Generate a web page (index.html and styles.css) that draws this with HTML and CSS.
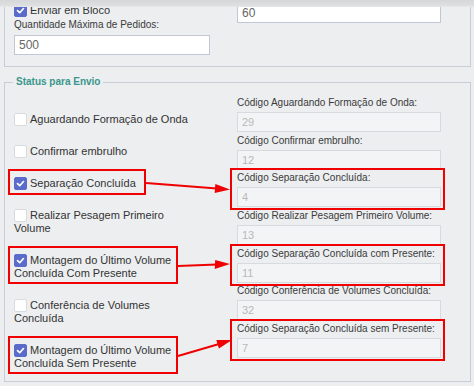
FILE: index.html
```html
<!DOCTYPE html>
<html lang="pt-BR">
<head>
<meta charset="UTF-8" />
<meta name="viewport" content="width=device-width, initial-scale=1" />
<title>Status para Envio</title>
<link rel="stylesheet" href="styles.css">
</head>
<body>

  <div class="topbar"></div>

  <main class="page">

    <div class="panel panel-top">
      <div class="col">
        <label class="check"><span class="box on"><svg viewBox="0 0 13 13"><polyline points="3,6.6 5.6,9.1 10,4.2" /></svg></span>Enviar em Bloco</label>
        <label class="field-label">Quantidade Máxima de Pedidos:</label>
        <input class="text text-short" type="text" value="500" />
      </div>
      <div class="col">
        <input class="text text-cut" type="text" value="60" />
      </div>
    </div>

    <fieldset class="panel status">
      <legend>Status para Envio</legend>

      <div class="checks">
        <label class="check"><span class="box"></span>Aguardando Formação de Onda</label>
        <label class="check"><span class="box"></span>Confirmar embrulho</label>
        <label class="check mark"><span class="box on"><svg viewBox="0 0 13 13"><polyline points="3,6.6 5.6,9.1 10,4.2" /></svg></span>Separação Concluída</label>
        <label class="check"><span class="box"></span>Realizar Pesagem Primeiro Volume</label>
        <label class="check mark wrap"><span class="box on"><svg viewBox="0 0 13 13"><polyline points="3,6.6 5.6,9.1 10,4.2" /></svg></span>Montagem do Último Volume Concluída Com Presente</label>
        <label class="check"><span class="box"></span>Conferência de Volumes Concluída</label>
        <label class="check mark wrap"><span class="box on"><svg viewBox="0 0 13 13"><polyline points="3,6.6 5.6,9.1 10,4.2" /></svg></span>Montagem do Último Volume Concluída Sem Presente</label>
      </div>

      <div class="fields">
        <div class="field">
          <label class="field-label">Código Aguardando Formação de Onda:</label>
          <input class="text" type="text" value="29" disabled />
        </div>
        <div class="field">
          <label class="field-label">Código Confirmar embrulho:</label>
          <input class="text" type="text" value="12" disabled />
        </div>
        <div class="field mark">
          <label class="field-label">Código Separação Concluída:</label>
          <input class="text" type="text" value="4" disabled />
        </div>
        <div class="field">
          <label class="field-label">Código Realizar Pesagem Primeiro Volume:</label>
          <input class="text" type="text" value="13" disabled />
        </div>
        <div class="field mark">
          <label class="field-label">Código Separação Concluída com Presente:</label>
          <input class="text" type="text" value="11" disabled />
        </div>
        <div class="field">
          <label class="field-label">Código Conferência de Volumes Concluída:</label>
          <input class="text" type="text" value="32" disabled />
        </div>
        <div class="field mark">
          <label class="field-label">Código Separação Concluída sem Presente:</label>
          <input class="text" type="text" value="7" disabled />
        </div>
      </div>
    </fieldset>

  </main>

  <!-- setas de anotação por cima do formulário -->
  <svg class="arrows" viewBox="0 0 474 386">
    <line x1="146" y1="183" x2="217" y2="188.4" />
    <polygon points="230,189.5 215.3,183.9 214.7,192.9" />
    <line x1="178" y1="266" x2="217" y2="264.5" />
    <polygon points="230,264 215.2,260.1 214.8,269.1" />
    <line x1="178" y1="356" x2="219" y2="344" />
    <polygon points="232,340 218.9,348.6 216.3,340" />
  </svg>

</body>
</html>
```

FILE: styles.css
```css
body {
  font-family: 'Liberation Sans', Arial, sans-serif;
  margin: 0;
  background: #eceef0;
  color: #333;
  position: relative;
  overflow: hidden;
}

/* sombra do cabeçalho fixo */
.topbar {
  position: fixed;
  top: 0;
  left: 0;
  right: 0;
  height: 6px;
  background: linear-gradient(#d6d7d9, #dfe0e2);
  border-bottom: 1px solid #e4e5e7;
  z-index: 5;
}

.page {
  padding: 0 3px 0 4px;
}

.panel {
  border: 1px solid #c8ccd6;
  margin: 0;
  min-width: 0;
  display: grid;
  grid-template-columns: 223px 204px;
}

.panel-top {
  border-top: 0;
  padding: 4px 0 11px 9px;
}

.panel-top .col {
  display: flex;
  flex-direction: column;
  align-items: flex-start;
}

.status {
  margin-top: 9px;
  padding: 0 0 11px 9px;
}

.status legend {
  font-size: 10px;
  line-height: 12px;
  font-weight: bold;
  color: #3a978b;
  padding: 0 3px;
  margin-left: -1px;
}

/* checkboxes */
.check {
  display: block;
  font-size: 11px;
  line-height: 13px;
  color: #333;
  max-width: 182px;
  position: relative;
}

.box {
  display: inline-block;
  vertical-align: top;
  width: 13px;
  height: 13px;
  margin-right: 3px;
  box-sizing: border-box;
  background: #fff;
  border: 1px solid #d9dadc;
  border-radius: 2px;
}

.box.on {
  background: #5b6bc9;
  border-color: #5b6bc9;
}

.box svg {
  display: block;
  width: 11px;
  height: 11px;
  margin: 0;
}

.box polyline {
  fill: none;
  stroke: #fff;
  stroke-width: 2;
  stroke-linecap: round;
  stroke-linejoin: round;
}

.checks {
  display: flex;
  flex-direction: column;
  align-items: flex-start;
  gap: 19px;
  padding-top: 25px;
}

/* campos */
.field-label {
  display: block;
  font-size: 10px;
  line-height: 13px;
  color: #3b3b3b;
}

.panel-top .field-label {
  margin-top: 1px;
}

.text {
  display: block;
  width: 204px;
  height: 20px;
  box-sizing: border-box;
  margin: 3px 0 0;
  padding: 0 4px;
  border: 1px solid #c3c7d5;
  background: #fff;
  font-family: 'Liberation Sans', Arial, sans-serif;
  font-size: 12px;
  color: #666;
  outline: none;
}

.text-short {
  width: 196px;
  margin-top: 4px;
}

.text-cut {
  margin-top: -1px;
}

.text:disabled {
  background: #f3f4f5;
  border-color: #d7dadf;
  color: #b8b8b8;
  font-size: 11px;
}

.fields {
  padding-top: 8px;
}

.field {
  position: relative;
  margin-bottom: 1.7px;
}

/* anotações em vermelho */
.mark::after {
  content: "";
  position: absolute;
  border: 2px solid #f00000;
  pointer-events: none;
}

.check.mark::after {
  top: -8px;
  bottom: -5px;
  left: -6px;
  right: -10px;
}

.check.mark.wrap::after {
  right: 18px;
  bottom: -4px;
}

.field.mark::after {
  top: -3px;
  bottom: -3px;
  left: -7px;
  right: -4px;
}

.arrows {
  position: absolute;
  top: 0;
  left: 0;
  width: 474px;
  height: 386px;
  pointer-events: none;
}

.arrows line {
  stroke: #f00000;
  stroke-width: 2;
}

.arrows polygon {
  fill: #f00000;
}
```
